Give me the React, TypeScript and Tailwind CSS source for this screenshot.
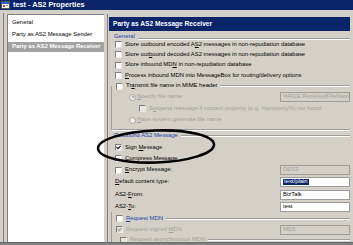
import React from 'react';

const font = "font-['Liberation_Sans',Arial,sans-serif]";

const Check = ({ checked = false, disabled = false }: { checked?: boolean; disabled?: boolean }) => (
  <div
    className={`w-[7px] h-[7px] shrink-0 border-t border-l border-[#808080] border-b border-r border-b-[#e8e8e8] border-r-[#e8e8e8] flex items-center justify-center ${
      disabled ? 'bg-[#e6e4df]' : 'bg-white'
    }`}
  >
    {checked && (
      <svg width="5" height="5" viewBox="0 0 5 5">
        <path d="M0.5 2.2 L2 3.7 L4.6 0.8" stroke={disabled ? '#9a9a9a' : '#000'} strokeWidth="1.1" fill="none" />
      </svg>
    )}
  </div>
);

const Radio = ({ on = false }: { on?: boolean }) => (
  <div className="w-[7px] h-[7px] shrink-0 rounded-full border border-[#a4a4a4] bg-[#eeede9] flex items-center justify-center">
    {on && <div className="w-[2px] h-[2px] rounded-full bg-[#9a9a9a]" />}
  </div>
);

const Box = ({ children, disabled = false }: { children: React.ReactNode; disabled?: boolean }) => (
  <div
    className={`w-[70px] h-[10px] shrink-0 border border-[#9c9c9c] flex items-center pl-[2px] whitespace-nowrap overflow-hidden ${
      disabled ? 'bg-[#d4d0c8] text-[#a0a0a0]' : 'bg-white text-black'
    }`}
  >
    {children}
  </div>
);

const Line = () => (
  <div className="flex-1 h-[2px] border-t border-[#9c9c9c] border-b border-b-white" />
);

export default function App() {
  return (
    <div className={`w-[353px] h-[245px] overflow-hidden relative bg-[#d4d0c8] flex flex-col ${font} text-[5.9px] leading-none text-black`}>
      {/* title bar */}
      <div className="h-[10px] shrink-0 bg-[#0a246a] flex items-center pl-[1px] gap-[3px]">
        <svg width="9" height="8" viewBox="0 0 9 8">
          <rect x="0.5" y="0.5" width="8" height="7" fill="#fff" stroke="#555" />
          <rect x="1" y="1" width="7" height="2" fill="#2a5bd0" />
          <rect x="2" y="4" width="2" height="2" fill="#d04030" />
          <rect x="5" y="4" width="2" height="1" fill="#777" />
        </svg>
        <span className="text-white font-bold text-[7.3px]">test - AS2 Properties</span>
      </div>

      {/* body */}
      <div className="flex flex-1 min-h-0">
        <div className="w-[3px] shrink-0" />
        <div className="w-px shrink-0 bg-[#808080] mt-[3px]" />

        {/* left list */}
        <div className="ml-[3px] mt-[4px] w-[97px] shrink-0 bg-white border-t border-l border-[#808080] overflow-hidden pt-[2px] whitespace-nowrap">
          <div className="h-[12px] flex items-center pl-[4px]">General</div>
          <div className="h-[12px] flex items-center pl-[4px]">Party as AS2 Message Sender</div>
          <div className="h-[12px] flex items-center">
            <div className="h-[10px] w-full bg-[#a2a2a2] text-white font-bold flex items-center pl-[4px]">
              Party as AS2 Message Receiver
            </div>
          </div>
        </div>

        {/* right panel */}
        <div className="ml-[3px] mt-[4px] mr-[3px] flex-1 min-w-0 border-l border-[#808080] flex flex-col overflow-hidden whitespace-nowrap">
          <div className="ml-px mt-[3px] h-[14px] shrink-0 bg-[#0a246a] text-white font-bold text-[6.6px] flex items-center pl-[4px]">
            Party as AS2 Message Receiver
          </div>

          <div className="pl-[7px] flex flex-col">
            <div className="mt-px h-[8px] flex items-end gap-[3px] -ml-[1px]">
              <span className="text-[#1c3fa8]">General</span>
              <Line />
            </div>
            <div className="h-[9px] flex items-center gap-[3px]">
              <Check />
              <span>Store outbound encoded A<u>S</u>2 messages in non-repudiation database</span>
            </div>
            <div className="h-[11px] flex items-center gap-[3px]">
              <Check />
              <span>Store out<u>b</u>ound decoded AS2 messages in non-repudiation database</span>
            </div>
            <div className="h-[10px] flex items-center gap-[3px]">
              <Check />
              <span>Store inbound MD<u>N</u> in non-repudiation database</span>
            </div>
            <div className="h-[11px] flex items-center gap-[3px]">
              <Check />
              <span><u>P</u>rocess inbound MDN into MessageBox for routing/delivery options</span>
            </div>
          </div>

          {/* transmit group */}
          <div className="ml-[3px] mt-[5px] border-l border-b border-[#9c9c9c] shadow-[1px_1px_0_#ffffff] flex flex-col pb-[3px]">
            <div className="-mt-[5px] h-[10px] flex items-center gap-[3px] pl-[4px] bg-transparent">
              <Check />
              <span>Tr<u>a</u>nsmit file name in MIME header</span>
              <Line />
            </div>
            <div className="h-[12px] flex items-center pl-[17px] text-[#a0a0a0]">
              <Radio on />
              <span className="ml-[1px] w-[156px]"><u>S</u>pecify file name:</span>
              <Box disabled>%FILE.ReceivedFileName%</Box>
            </div>
            <div className="h-[11px] flex items-center gap-[3px] pl-[27px] text-[#a0a0a0]">
              <Check disabled />
              <span>S<u>u</u>spend message if context property (e.g. %property%) not found</span>
            </div>
            <div className="h-[12px] flex items-center gap-[1px] pl-[17px] text-[#a0a0a0]">
              <Radio />
              <span><u>H</u>ave system generate file name</span>
            </div>
          </div>

          <div className="pl-[7px] flex flex-col">
            <div className="h-[12px] flex items-center gap-[3px] -ml-[1px]">
              <span className="text-[#1c3fa8]">Outbound AS2 Message</span>
              <Line />
            </div>
            <div className="h-[11px] flex items-center gap-[3px]">
              <Check checked />
              <span>Sign <u>M</u>essage</span>
            </div>
            <div className="h-[11px] flex items-center gap-[3px]">
              <Check />
              <span><u>C</u>ompress Message</span>
            </div>
            <div className="h-[12px] flex items-center">
              <Check />
              <span className="ml-[3px] w-[166px]"><u>E</u>ncrypt Message:</span>
              <Box disabled>DES3</Box>
            </div>
            <div className="h-[12px] flex items-center">
              <span className="w-[176px]"><u>D</u>efault content type:</span>
              <Box>
                <span className="bg-[#0a246a] text-white px-px">text/plain</span>
              </Box>
            </div>
            <div className="h-[13px] flex items-center">
              <span className="w-[176px]">AS2-<u>F</u>rom:</span>
              <Box>BizTalk</Box>
            </div>
            <div className="h-[11px] flex items-center">
              <span className="w-[176px]">AS2-<u>T</u>o:</span>
              <Box>test</Box>
            </div>
          </div>

          {/* request MDN group */}
          <div className="ml-[3px] border-l border-[#9c9c9c] flex flex-col">
            <div className="h-[13px] flex items-center gap-[3px] pl-[4px]">
              <Check />
              <span className="text-[#1c3fa8]"><u>R</u>equest MDN</span>
              <Line />
            </div>
            <div className="h-[9px] flex items-center pl-[4px] text-[#a0a0a0]">
              <Check checked disabled />
              <span className="ml-[3px] w-[166px]">Request signed <u>M</u>DN</span>
              <Box disabled>MD5</Box>
            </div>
            <div className="h-[12px] flex items-center gap-[3px] pl-[8px] text-[#a0a0a0]">
              <Check disabled />
              <span>Request asynchronous MDN</span>
              <Line />
            </div>
          </div>
        </div>
      </div>

      <div className="h-[3px] shrink-0 bg-[#808080] border-t border-[#6a6a6a]" />

      {/* annotation ellipse */}
      <svg className="absolute left-0 top-0 pointer-events-none" width="353" height="245">
        <ellipse cx="156" cy="146.5" rx="58" ry="16" fill="none" stroke="#000" strokeWidth="2.6" transform="rotate(-2 156 146.5)" />
      </svg>
    </div>
  );
}
